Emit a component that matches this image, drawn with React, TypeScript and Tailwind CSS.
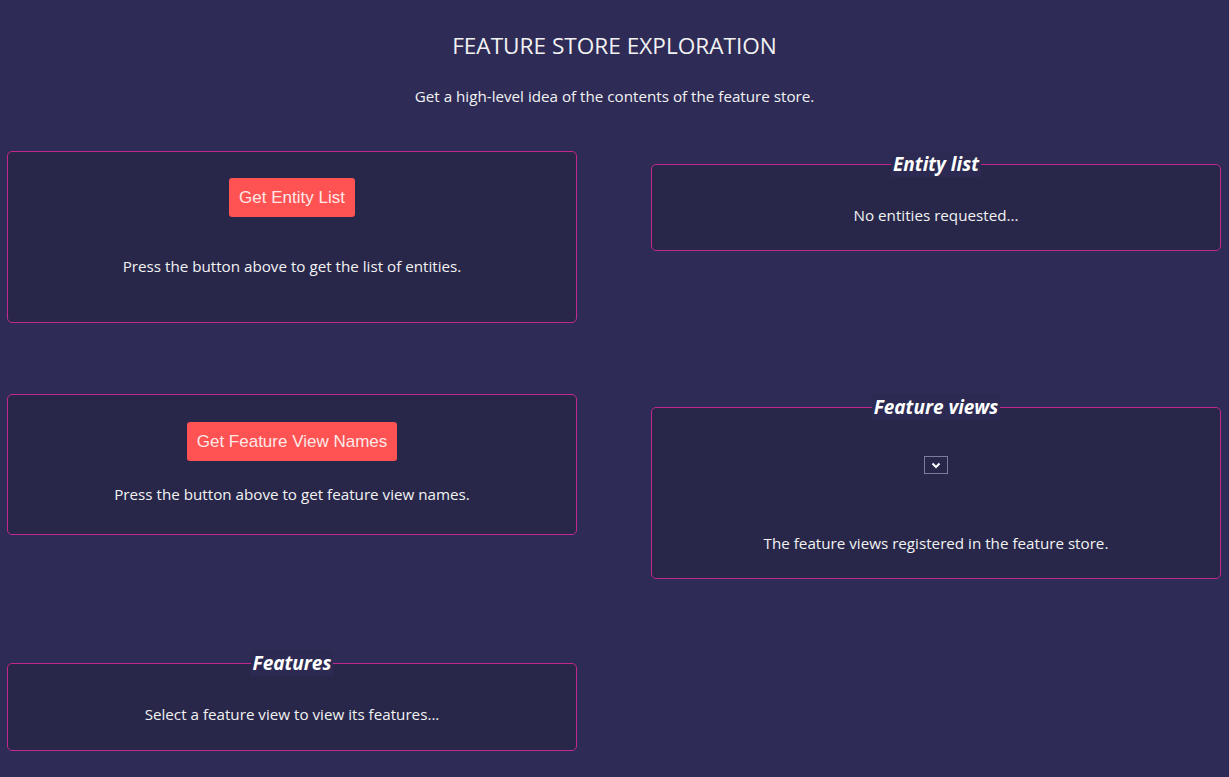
import { ReactNode } from 'react';

const font = { fontFamily: '"Open Sans", "Noto Sans", sans-serif' };

function Panel({ children, className = '' }: { children: ReactNode; className?: string }) {
  return (
    <div className={`rounded-[5px] border border-[#c4288f] bg-[#28274a] text-center ${className}`}>
      {children}
    </div>
  );
}

function Group({ title, children, className = '' }: { title: string; children: ReactNode; className?: string }) {
  return (
    <fieldset className={`rounded-[5px] border border-[#c4288f] bg-[#28274a] text-center ${className}`}>
      <legend className="mx-auto bg-[#2c2a52] px-[2px] text-[19px] font-bold italic leading-[26px] text-white">
        {title}
      </legend>
      {children}
    </fieldset>
  );
}

function RedButton({ label }: { label: string }) {
  return (
    <button className="rounded-[3px] bg-[#ff5252] px-[10px] py-[8px] text-[17px] leading-[23px] text-[#fde8e8] [font-family:'Liberation_Sans',Arial,sans-serif]">
      {label}
    </button>
  );
}

export default function App() {
  return (
    <main className="min-h-[777px] bg-[#2e2b56] text-[15.2px] text-[#f2f2f2]" style={font}>
      {/* Header */}
      <header className="pt-[31px] text-center">
        <h1 className="text-[22.6px] font-normal leading-[30px]">FEATURE STORE EXPLORATION</h1>
        <p className="mt-[24px] leading-[22px]">Get a high-level idea of the contents of the feature store.</p>
      </header>

      <section className="mt-[44px] grid grid-cols-[570px_570px] gap-x-[74px] gap-y-[71px] pl-[7px]">
        {/* Row 1 */}
        <Panel className="h-[172px] pt-[26px]">
          <RedButton label="Get Entity List" />
          <p className="mt-[38px] leading-[22px]">Press the button above to get the list of entities.</p>
        </Panel>
        <div>
          <Group title="Entity list" className="h-[100px] pt-[27px]">
            <p className="leading-[22px]">No entities requested...</p>
          </Group>
        </div>

        {/* Row 2 */}
        <Panel className="h-[141px] pt-[27px]">
          <RedButton label="Get Feature View Names" />
          <p className="mt-[22px] leading-[22px]">Press the button above to get feature view names.</p>
        </Panel>
        <div>
          <Group title="Feature views" className="h-[185px] pt-[36px]">
            <div className="mx-auto flex h-[18px] w-[24px] items-center justify-center border border-[#7d7b9c] bg-[#28274a]">
              <svg width="10" height="7" viewBox="0 0 10 7" fill="none" stroke="#ffffff" strokeWidth="2">
                <path d="M1.5 1.5 5 5 8.5 1.5" />
              </svg>
            </div>
            <p className="mt-[58px] leading-[22px]">The feature views registered in the feature store.</p>
          </Group>
        </div>

        {/* Row 3 */}
        <div>
          <Group title="Features" className="h-[101px] pt-[27px]">
            <p className="leading-[22px]">Select a feature view to view its features...</p>
          </Group>
        </div>
      </section>
    </main>
  );
}
